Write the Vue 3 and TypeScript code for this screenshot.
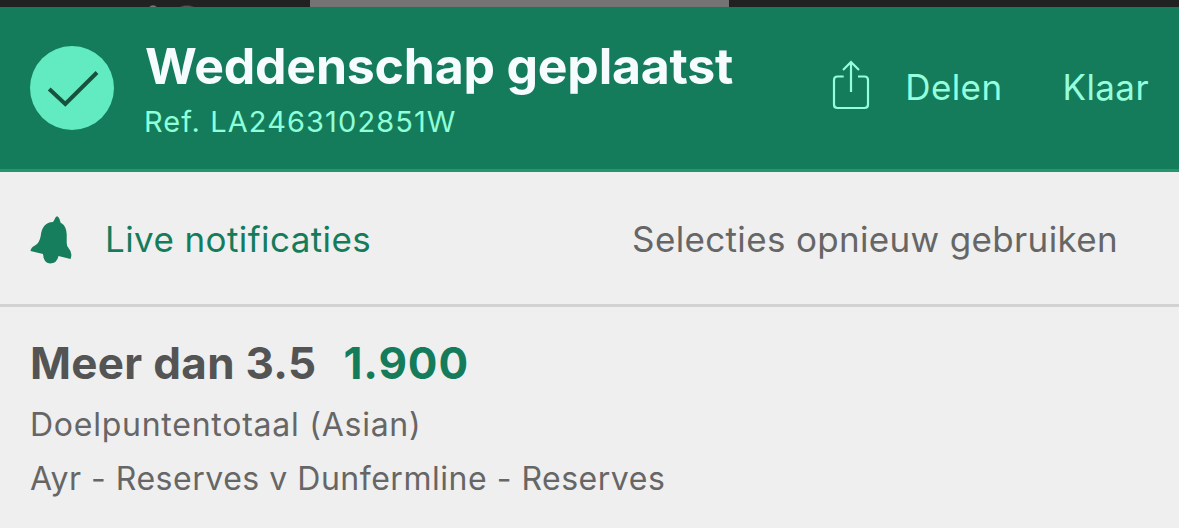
<template>
  <div class="receipt">
    <div class="strip"><div class="stripLight"></div></div>
    <header class="header">
      <svg class="check" viewBox="0 0 84 84">
        <circle cx="42" cy="42" r="42" fill="#62ebc0" />
        <path d="M19.200 43 L35.300 58 L67 26.500" fill="none" stroke="#18523f" stroke-width="4" />
      </svg>
      <div class="titles">
        <div class="title">Weddenschap geplaatst</div>
        <div class="ref">Ref. {{ reference }}</div>
      </div>
      <button class="action share">
        <svg class="shareIcon" viewBox="0 0 38 50" fill="none" stroke="#94ffdd" stroke-width="2.2">
          <path d="M11.7 16.5 H5.5 Q2 16.5 2 20 V44.5 Q2 48 5.5 48 H32.5 Q36 48 36 44.5 V20 Q36 16.5 32.5 16.5 H26" />
          <path d="M19 32 V3 M11 10 L19 2 L27 10" />
        </svg>
        <span>Delen</span>
      </button>
      <button class="action done">Klaar</button>
    </header>
    <div class="options">
      <svg class="bell" viewBox="0 0 42 48" fill="#167e5d">
        <path d="M24.500 3.500 Q27 -2.500 29.500 3 L30.500 6.500 Q36.500 10 36.700 18 V26 Q36.500 30 38.500 32 Q43 37 40.500 43 L28.500 40 Q27 47.500 20 47.500 Q13.500 47 13 38 L0.500 35 Q1 31 5 29.500 Q9.500 27 10.700 20 Q12 6.500 23 6 Z" />
      </svg>
      <span class="live">Live notificaties</span>
      <span class="reuse">Selecties opnieuw gebruiken</span>
    </div>
    <section class="bet">
      <div class="selection">
        <span class="name">{{ bet.name }}</span>
        <span class="odds">{{ bet.odds }}</span>
      </div>
      <div class="market">{{ bet.market }}</div>
      <div class="event">{{ bet.event }}</div>
    </section>
  </div>
</template>

<script setup lang="ts">
interface Bet {
  name: string
  odds: string
  market: string
  event: string
}

const reference = 'LA2463102851W'
const bet: Bet = {
  name: 'Meer dan 3.5',
  odds: '1.900',
  market: 'Doelpuntentotaal (Asian)',
  event: 'Ayr - Reserves v Dunfermline - Reserves'
}
</script>

<style>
body {
  margin: 0;
  background: #efefef;
}
</style>

<style scoped>
* {
  box-sizing: border-box;
}

.receipt {
  width: 1179px;
  height: 528px;
  overflow: hidden;
  background: #efefef;
  font-family: Inter, "Liberation Sans", sans-serif;
  color: #666;
  white-space: nowrap;
}

.strip {
  height: 7px;
  /* tips of the dimmed text behind the sheet */
  background:
    radial-gradient(ellipse 4px 2px at 153px 7px, #777 60%, transparent),
    radial-gradient(ellipse 8px 2px at 187px 7px, #555 40%, transparent),
    #212121;
}

.stripLight {
  width: 419px;
  height: 7px;
  margin-left: 310px;
  background: #757373;
}

.header {
  display: flex;
  height: 165px;
  padding: 0 30px;
  background: #147c5b;
  border-bottom: 3px solid #259570;
}

.check {
  width: 84px;
  height: 84px;
  margin-top: 39px;
}

.titles {
  margin: 28px 0 0 31px;
}

.title {
  height: 63px;
  line-height: 63px;
  font-size: 50px;
  font-weight: 700;
  letter-spacing: -0.22px;
  color: #f6fbfd;
}

.ref {
  height: 48px;
  margin-left: -1px;
  line-height: 48px;
  font-size: 29px;
  letter-spacing: 1.1px;
  color: #8effd9;
}

.action {
  display: flex;
  align-items: center;
  height: 50px;
  margin-top: 53px;
  padding: 0;
  border: 0;
  background: none;
  font: inherit;
  font-size: 35px;
  line-height: 50px;
  letter-spacing: 0.4px;
  color: #94ffdd;
}

.share {
  margin-left: auto;
}

.shareIcon {
  width: 38px;
  height: 50px;
  margin-right: 35px;
}

.share span,
.done {
  padding-top: 4px;
}

.done {
  margin-left: 60px;
}

.options {
  display: flex;
  align-items: center;
  height: 135px;
  padding: 2px 61px 0 30px;
  border-bottom: 3px solid #d2d2d2;
  font-size: 35px;
}

.bell {
  width: 42px;
  height: 48px;
  margin-top: 2px;
}

.live {
  margin-left: 33px;
  letter-spacing: 0.4px;
  color: #147c5b;
}

.reuse {
  margin-left: auto;
  letter-spacing: 0.34px;
}

.bet {
  padding: 28px 30px 0;
  font-size: 32px;
  letter-spacing: 0.52px;
}

.selection {
  display: flex;
  height: 56px;
  line-height: 56px;
  font-size: 44px;
  font-weight: 700;
  color: #545454;
}

.name {
  letter-spacing: 0.3px;
}

.odds {
  margin-left: 27px;
  letter-spacing: 0.9px;
  color: #147c5b;
}

.market,
.event {
  height: 54px;
  line-height: 54px;
}

.market {
  margin-top: 7px;
  letter-spacing: 0.75px;
}
</style>
